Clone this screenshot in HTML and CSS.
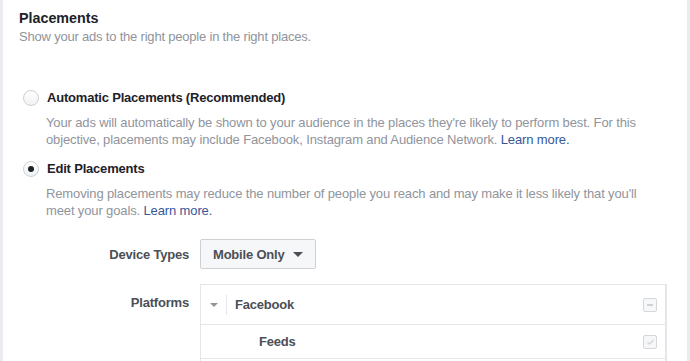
FILE: index.html
```html
<!DOCTYPE html>
<html lang="en">
<head>
    <meta charset="UTF-8">
    <meta name="viewport" content="width=device-width, initial-scale=1.0">
    <title>Placements</title>
    <link rel="stylesheet" href="styles.css">
</head>
<body>

    <div class="panel">
        <h2 class="title">Placements</h2>
        <p class="subtitle">Show your ads to the right people in the right places.</p>

        <div class="option">
            <div class="option-head">
                <span class="radio"></span>
                <span class="option-label">Automatic Placements (Recommended)</span>
            </div>
            <p class="option-desc">Your ads will automatically be shown to your audience in the places they're likely to perform best. For this objective, placements may include Facebook, Instagram and Audience Network. <a href="#">Learn more.</a></p>
        </div>

        <div class="option">
            <div class="option-head">
                <span class="radio checked"></span>
                <span class="option-label">Edit Placements</span>
            </div>
            <p class="option-desc">Removing placements may reduce the number of people you reach and may make it less likely that you'll meet your goals. <a href="#">Learn more.</a></p>
        </div>

        <div class="field">
            <label class="field-label">Device Types</label>
            <button class="dropdown">Mobile Only <span class="caret"></span></button>
        </div>

        <div class="field platforms-field">
            <label class="field-label platforms-label">Platforms</label>
            <div class="platforms">
                <div class="platform-row">
                    <span class="toggle"><span class="caret light"></span></span>
                    <span class="platform-name">Facebook</span>
                    <span class="checkbox">
                        <svg width="8" height="8" viewBox="0 0 8 8"><path d="M1 4h6" stroke="#c4c7cc" stroke-width="1.6"/></svg>
                    </span>
                </div>
                <div class="platform-row sub">
                    <span class="platform-name">Feeds</span>
                    <span class="checkbox">
                        <svg width="9" height="8" viewBox="0 0 9 8"><path d="M1.5 4.2l2 2 4-4.2" fill="none" stroke="#d3d5d9" stroke-width="1.2"/></svg>
                    </span>
                </div>
                <div class="platform-row sub">
                    <span class="platform-name">Instant Articles</span>
                </div>
            </div>
        </div>
    </div>

</body>
</html>
```

FILE: styles.css
```css
body {
    margin: 0;
    background-color: #e9ebee;
    font-family: "Liberation Sans", Arial, sans-serif;
    color: #1d2129;
    height: 361px;
    overflow: hidden;
}

.panel {
    margin: 0 3px;
    background: #fff;
    height: 100%;
    padding: 9px 20px 0 16px;
}

.title {
    margin: 0;
    font-size: 14.3px;
    font-weight: bold;
    line-height: 18px;
}

.subtitle {
    margin: 1px 0 0;
    font-size: 13px;
    letter-spacing: -0.2px;
    line-height: 18px;
    color: #90949c;
}

.option {
    margin-top: 43px;
}

.option + .option {
    margin-top: 12px;
}

.option-head {
    display: flex;
    align-items: center;
    gap: 8px;
    padding-left: 4px;
}

.radio {
    width: 14px;
    height: 14px;
    border: 1px solid #ccd0d5;
    border-radius: 50%;
    background: linear-gradient(#fff, #f1f2f4);
    display: flex;
    align-items: center;
    justify-content: center;
}

.radio.checked::after {
    content: "";
    width: 6px;
    height: 6px;
    border-radius: 50%;
    background: #1d2129;
}

.option-label {
    font-size: 13px;
    letter-spacing: -0.2px;
    font-weight: bold;
    line-height: 18px;
}

.option-desc {
    margin: 7px 0 0 27px;
    padding-right: 12px;
    font-size: 13px;
    letter-spacing: -0.13px;
    line-height: 17px;
    color: #90949c;
}

.option-desc a {
    color: #365899;
    text-decoration: none;
}

.field {
    display: flex;
    align-items: center;
    gap: 11px;
    margin-top: 20px;
}

.platforms-field {
    margin-top: 15px;
}

.field-label {
    width: 170px;
    text-align: right;
    font-size: 13px;
    letter-spacing: -0.2px;
    font-weight: bold;
    color: #4b4f56;
}

.platforms-label {
    align-self: flex-start;
    margin-top: 11px;
}

.dropdown {
    height: 30px;
    padding: 0 12px;
    border: 1px solid #ced0d4;
    border-radius: 2px;
    background: #f6f7f9;
    font-family: inherit;
    font-size: 13px;
    letter-spacing: -0.2px;
    font-weight: bold;
    color: #4b4f56;
    display: flex;
    align-items: center;
    gap: 9px;
}

.caret {
    width: 0;
    height: 0;
    border-left: 5px solid transparent;
    border-right: 5px solid transparent;
    border-top: 5px solid #4b4f56;
}

.caret.light {
    border-left-width: 4px;
    border-right-width: 4px;
    border-top: 4px solid #90949c;
}

.platforms {
    flex: 1;
    border: 1px solid #e5e6e9;
    border-right-width: 2px;
}

.platform-row {
    display: flex;
    align-items: center;
    height: 39px;
    border-bottom: 1px solid #e5e6e9;
    padding-right: 8px;
}

.platform-row.sub {
    height: 33px;
    padding-left: 58px;
}

.toggle {
    width: 25px;
    height: 20px;
    display: flex;
    align-items: center;
    justify-content: center;
    border-right: 1px solid #e5e6e9;
    margin: 0 8px 0 0;
}

.platform-name {
    flex: 1;
    font-size: 13px;
    letter-spacing: -0.2px;
    font-weight: bold;
    color: #4b4f56;
}

.checkbox {
    width: 12px;
    height: 12px;
    border: 1px solid #d5d7db;
    border-radius: 2px;
    background: #f6f7f9;
    display: flex;
    align-items: center;
    justify-content: center;
}
```
